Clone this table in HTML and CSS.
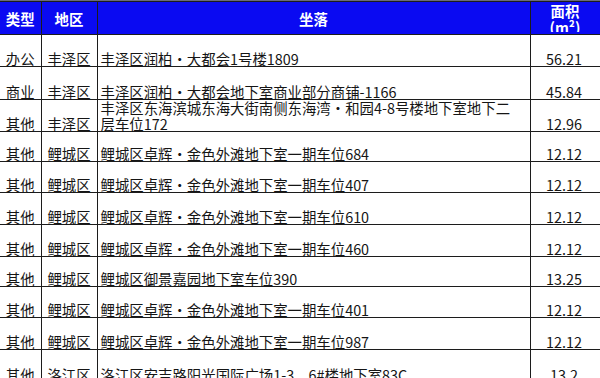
FILE: index.html
```html
<!DOCTYPE html>
<html lang="zh-CN">
<head>
<meta charset="utf-8">
<title>房产列表</title>
<link rel="stylesheet" href="styles.css">
</head>
<body>
<div class="sheet">
<table class="grid">
  <colgroup>
    <col class="c-type">
    <col class="c-area">
    <col class="c-loc">
    <col class="c-size">
  </colgroup>
  <thead>
    <tr class="head">
      <th>类型</th>
      <th>地区</th>
      <th>坐落</th>
      <th class="wrap"><div class="clip">面积<br>(m²)</div></th>
    </tr>
  </thead>
  <tbody>
    <tr class="r32"><td class="ctr">办公</td><td class="ctr">丰泽区</td><td class="loc">丰泽区润柏·大都会1号楼1809</td><td class="num">56.21</td></tr>
    <tr class="r33"><td class="ctr">商业</td><td class="ctr">丰泽区</td><td class="loc">丰泽区润柏·大都会地下室商业部分商铺-1166</td><td class="num">45.84</td></tr>
    <tr class="r31"><td class="ctr">其他</td><td class="ctr">丰泽区</td><td class="loc two">丰泽区东海滨城东海大街南侧东海湾·和园4-8号楼地下室地下二<br>层车位172</td><td class="num">12.96</td></tr>
    <tr class="r30"><td class="ctr">其他</td><td class="ctr">鲤城区</td><td class="loc">鲤城区卓辉·金色外滩地下室一期车位684</td><td class="num">12.12</td></tr>
    <tr class="r31"><td class="ctr">其他</td><td class="ctr">鲤城区</td><td class="loc">鲤城区卓辉·金色外滩地下室一期车位407</td><td class="num">12.12</td></tr>
    <tr class="r32"><td class="ctr">其他</td><td class="ctr">鲤城区</td><td class="loc">鲤城区卓辉·金色外滩地下室一期车位610</td><td class="num">12.12</td></tr>
    <tr class="r32"><td class="ctr">其他</td><td class="ctr">鲤城区</td><td class="loc">鲤城区卓辉·金色外滩地下室一期车位460</td><td class="num">12.12</td></tr>
    <tr class="r30"><td class="ctr">其他</td><td class="ctr">鲤城区</td><td class="loc">鲤城区御景嘉园地下室车位390</td><td class="num">13.25</td></tr>
    <tr class="r31"><td class="ctr">其他</td><td class="ctr">鲤城区</td><td class="loc">鲤城区卓辉·金色外滩地下室一期车位401</td><td class="num">12.12</td></tr>
    <tr class="r32"><td class="ctr">其他</td><td class="ctr">鲤城区</td><td class="loc">鲤城区卓辉·金色外滩地下室一期车位987</td><td class="num">12.12</td></tr>
    <tr class="r33"><td class="ctr">其他</td><td class="ctr">洛江区</td><td class="loc">洛江区安吉路阳光国际广场1-3、6#楼地下室83C</td><td class="num">13.2</td></tr>
  </tbody>
</table>
</div>
</body>
</html>
```

FILE: styles.css
```css
html, body {
  margin: 0;
  padding: 0;
  background: #ffffff;
}

.sheet {
  width: 600px;
  height: 378px;
  overflow: hidden;
  border-top: 1px solid #6a6a7a;
  box-sizing: border-box;
}

.grid {
  border-collapse: collapse;
  table-layout: fixed;
  width: 610px;
  font-family: "Noto Sans CJK SC", "Noto Sans", sans-serif;
  font-size: 14.4px;
  color: #151515;
}

.c-type { width: 41px; }
.c-area { width: 56px; }
.c-loc  { width: 433px; }
.c-size { width: 80px; }

.grid th,
.grid td {
  border: 1px solid #1c1c1c;
  padding: 0;
  white-space: nowrap;
}

.grid tr > :first-child { border-left: none; }

.head th {
  background: #0a0af2;
  color: #ffffff;
  font-weight: bold;
  height: 30px;
  line-height: 16px;
  text-align: center;
  vertical-align: middle;
  padding-top: 2px;
}

.head th.wrap {
  vertical-align: top;
  padding-top: 0;
}

.head .clip {
  height: 30px;
  overflow: hidden;
  padding-top: 1px;
  padding-right: 10px;
  box-sizing: border-box;
}

.grid td {
  vertical-align: bottom;
  line-height: 15px;
}

.r30 td { height: 29px; }
.r31 td { height: 30px; }
.r32 td { height: 31px; }
.r33 td { height: 32px; }

.ctr { text-align: center; }

.loc {
  text-align: left;
  padding-left: 3px !important;
}

.loc.two { line-height: 15.5px; }

.num {
  text-align: center;
  padding-right: 12px !important;
}
```
